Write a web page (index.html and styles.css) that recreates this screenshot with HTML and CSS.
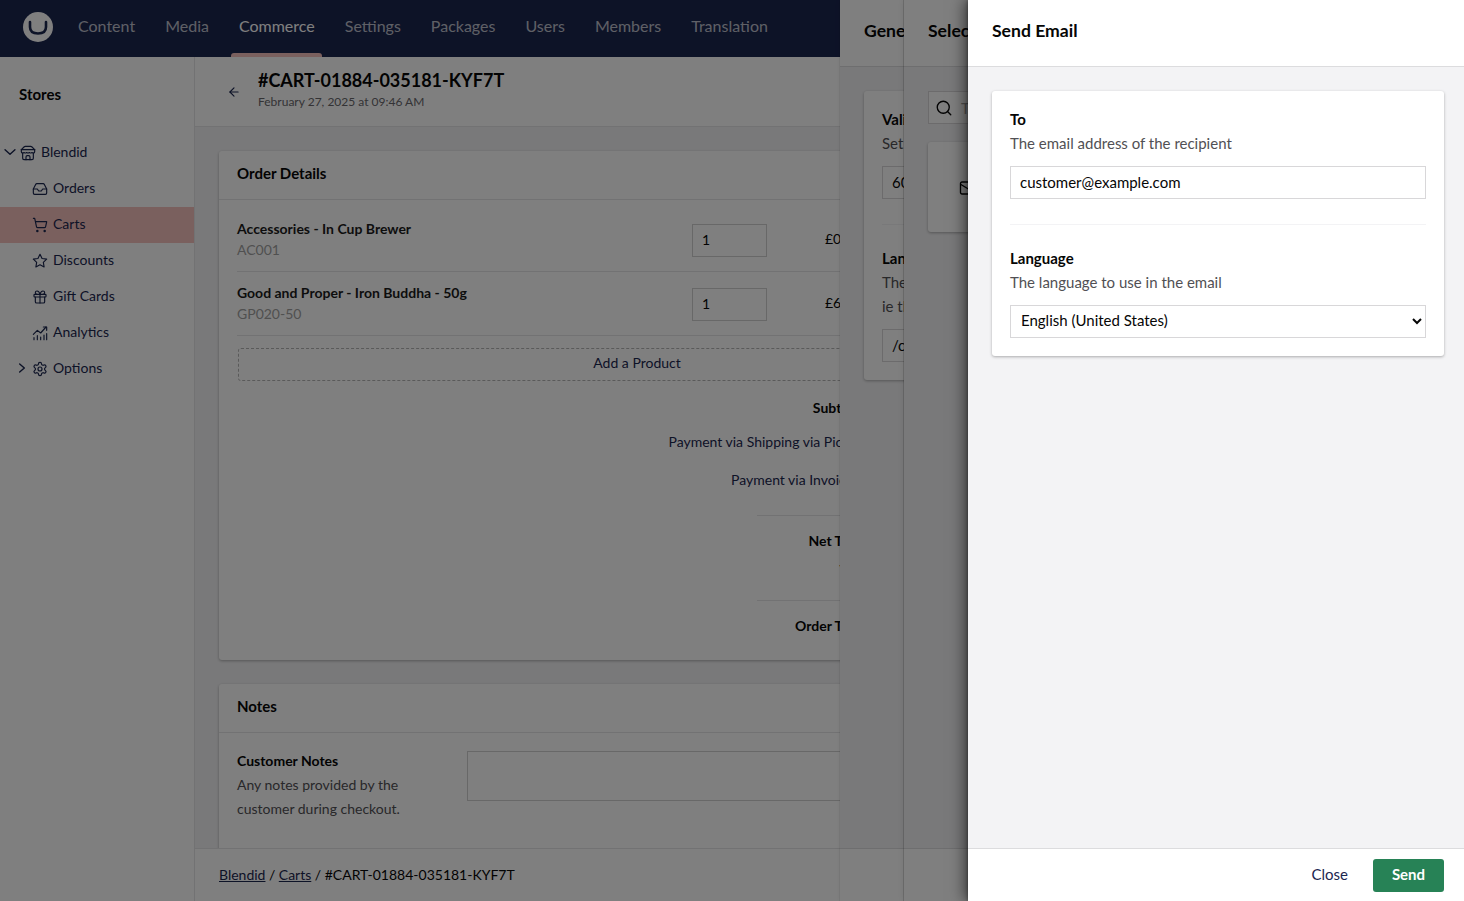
FILE: index.html
```html
<!DOCTYPE html>
<html lang="en">
<head>
<meta charset="utf-8">
<title>Send Email</title>
<link rel="stylesheet" href="styles.css">
</head>
<body>
<svg class="sprite" aria-hidden="true">
  <defs>
    <symbol id="i-down" viewBox="0 0 24 24"><path d="m3.500 8 8.500 8 8.500-8"/></symbol>
    <symbol id="i-right" viewBox="0 0 24 24"><path d="m8 5 8 7-8 7"/></symbol>
    <symbol id="i-store" viewBox="0 0 24 24"><path d="m2 7 4.41-4.41A2 2 0 0 1 7.83 2h8.34a2 2 0 0 1 1.42.59L22 7"/><path d="M4 12v8a2 2 0 0 0 2 2h12a2 2 0 0 0 2-2v-8"/><path d="M15 22v-4a2 2 0 0 0-2-2h-2a2 2 0 0 0-2 2v4"/><path d="M2 7h20"/><path d="M22 7v3a2 2 0 0 1-2 2 2.7 2.7 0 0 1-1.59-.63.7.7 0 0 0-.82 0A2.7 2.7 0 0 1 16 12a2.7 2.7 0 0 1-1.59-.63.7.7 0 0 0-.82 0A2.7 2.7 0 0 1 12 12a2.7 2.7 0 0 1-1.59-.63.7.7 0 0 0-.82 0A2.7 2.7 0 0 1 8 12a2.7 2.7 0 0 1-1.59-.63.7.7 0 0 0-.82 0A2.7 2.7 0 0 1 4 12a2 2 0 0 1-2-2V7"/></symbol>
    <symbol id="i-inbox" viewBox="0 0 24 24"><polyline points="22 12 16 12 14 15 10 15 8 12 2 12"/><path d="M5.45 5.11 2 12v6a2 2 0 0 0 2 2h16a2 2 0 0 0 2-2v-6l-3.45-6.89A2 2 0 0 0 16.76 4H7.24a2 2 0 0 0-1.79 1.11z"/></symbol>
    <symbol id="i-cart" viewBox="0 0 24 24"><circle cx="8" cy="21" r="1"/><circle cx="19" cy="21" r="1"/><path d="M2.05 2.05h2l2.66 12.42a2 2 0 0 0 2 1.58h9.78a2 2 0 0 0 1.95-1.57l1.65-7.43H5.12"/></symbol>
    <symbol id="i-star" viewBox="0 0 24 24"><polygon points="12 2 15.09 8.26 22 9.27 17 14.14 18.18 21.02 12 17.77 5.82 21.02 7 14.14 2 9.27 8.91 8.26 12 2"/></symbol>
    <symbol id="i-gift" viewBox="0 0 24 24"><rect x="3" y="8" width="18" height="4" rx="1"/><path d="M12 8v13"/><path d="M19 12v7a2 2 0 0 1-2 2H7a2 2 0 0 1-2-2v-7"/><path d="M7.5 8a2.5 2.500 0 0 1 0-5A4.800 8 0 0 1 12 8a4.800 8 0 0 1 4.500-5 2.500 2.500 0 0 1 0 5"/></symbol>
    <symbol id="i-chart" viewBox="0 0 24 24"><path d="M3 22v-3M8 22v-6M13 22v-4M18 22v-7M22 22v-9"/><path d="m2 14 6-6 5 4 8-9"/><path d="M17 3h5v5"/></symbol>
    <symbol id="i-gear" viewBox="0 0 24 24"><path d="M12.22 2h-.44a2 2 0 0 0-2 2v.18a2 2 0 0 1-1 1.73l-.43.25a2 2 0 0 1-2 0l-.15-.08a2 2 0 0 0-2.73.73l-.22.38a2 2 0 0 0 .73 2.73l.15.1a2 2 0 0 1 1 1.72v.51a2 2 0 0 1-1 1.74l-.15.09a2 2 0 0 0-.73 2.73l.22.38a2 2 0 0 0 2.73.73l.15-.08a2 2 0 0 1 2 0l.43.25a2 2 0 0 1 1 1.73V20a2 2 0 0 0 2 2h.44a2 2 0 0 0 2-2v-.18a2 2 0 0 1 1-1.73l.43-.25a2 2 0 0 1 2 0l.15.08a2 2 0 0 0 2.73-.73l.22-.39a2 2 0 0 0-.73-2.73l-.15-.08a2 2 0 0 1-1-1.74v-.5a2 2 0 0 1 1-1.74l.15-.09a2 2 0 0 0 .73-2.73l-.22-.38a2 2 0 0 0-2.73-.73l-.15.08a2 2 0 0 1-2 0l-.43-.25a2 2 0 0 1-1-1.73V4a2 2 0 0 0-2-2z"/><circle cx="12" cy="12" r="3"/></symbol>
  </defs>
</svg>

<div class="app">
  <header class="topbar">
    <svg class="logo" viewBox="0 0 30 30" aria-hidden="true"><circle cx="15" cy="15" r="15" fill="#fff"/><path class="logo-u" d="M7 10v5c0 4.500 2.500 6.500 8 6.500s8-2 8-6.500v-5"/></svg>
    <nav class="tabs">
      <a class="tab">Content</a>
      <a class="tab">Media</a>
      <a class="tab tab-active">Commerce</a>
      <a class="tab">Settings</a>
      <a class="tab">Packages</a>
      <a class="tab">Users</a>
      <a class="tab">Members</a>
      <a class="tab">Translation</a>
    </nav>
  </header>

  <div class="workspace">
    <aside class="sidebar">
      <h2 class="sidebar-title">Stores</h2>
      <ul class="tree">
        <li class="tree-row tree-root"><svg class="chev"><use href="#i-down"/></svg><svg class="ico"><use href="#i-store"/></svg>Blendid</li>
        <li class="tree-row"><span class="chev"></span><svg class="ico"><use href="#i-inbox"/></svg>Orders</li>
        <li class="tree-row tree-current"><span class="chev"></span><svg class="ico"><use href="#i-cart"/></svg>Carts</li>
        <li class="tree-row"><span class="chev"></span><svg class="ico"><use href="#i-star"/></svg>Discounts</li>
        <li class="tree-row"><span class="chev"></span><svg class="ico"><use href="#i-gift"/></svg>Gift Cards</li>
        <li class="tree-row"><span class="chev"></span><svg class="ico"><use href="#i-chart"/></svg>Analytics</li>
        <li class="tree-row"><svg class="chev"><use href="#i-right"/></svg><svg class="ico"><use href="#i-gear"/></svg>Options</li>
      </ul>
    </aside>

    <main class="main">
      <div class="main-head">
        <svg class="back" viewBox="0 0 24 24" aria-hidden="true"><path d="m12 19-7-7 7-7"/><path d="M19 12H5"/></svg>
        <div>
          <h1 class="order-id">#CART-01884-035181-KYF7T</h1>
          <p class="order-date">February 27, 2025 at 09:46 AM</p>
        </div>
      </div>

      <div class="main-scroll">
        <section class="card">
          <h3 class="card-head">Order Details</h3>
          <div class="card-body">
            <div class="line-item">
              <div class="line-info">
                <strong class="line-name">Accessories - In Cup Brewer</strong>
                <span class="line-sku">AC001</span>
              </div>
              <input class="qty" value="1">
              <span class="price">£0.00</span>
            </div>
            <div class="line-item">
              <div class="line-info">
                <strong class="line-name">Good and Proper - Iron Buddha - 50g</strong>
                <span class="line-sku">GP020-50</span>
              </div>
              <input class="qty" value="1">
              <span class="price">£6.50</span>
            </div>
            <button class="add-product">Add a Product</button>
            <div class="summary">
              <div class="sum-row sum-strong">Subtotal</div>
              <div class="sum-row sum-ship">Payment via Shipping via Pickup</div>
              <div class="sum-row sum-pay">Payment via Invoice</div>
              <hr class="sum-rule sum-rule-a">
              <div class="sum-row sum-strong sum-total">Net Total</div>
              <div class="sum-row sum-vat">VAT</div>
              <hr class="sum-rule sum-rule-b">
              <div class="sum-row sum-strong sum-total">Order Total</div>
            </div>
          </div>
        </section>

        <section class="card card-notes">
          <h3 class="card-head">Notes</h3>
          <div class="notes-body">
            <div class="notes-label">
              <strong class="notes-title">Customer Notes</strong>
              <p class="notes-desc">Any notes provided by the customer during checkout.</p>
            </div>
            <div class="notes-area"></div>
          </div>
        </section>
      </div>

      <footer class="crumbs"><a class="crumb-link">Blendid</a> / <a class="crumb-link">Carts</a> / #CART-01884-035181-KYF7T</footer>
    </main>
  </div>

  <section class="drawer drawer-one">
    <h2 class="drawer-head">Generate Link</h2>
    <div class="drawer-body">
      <div class="card form-card">
        <div class="field">
          <strong class="field-label">Validity</strong>
          <p class="field-desc">Set the period the link is valid for</p>
          <input class="text-input" value="60">
        </div>
        <hr class="field-rule">
        <div class="field field-next">
          <strong class="field-label">Landing Page</strong>
          <p class="field-desc">The path to redirect the customer to,<br>ie the checkout page</p>
          <input class="text-input" value="/checkout">
        </div>
      </div>
    </div>
    <div class="drawer-foot"></div>
  </section>

  <section class="drawer drawer-two">
    <h2 class="drawer-head">Select Template</h2>
    <div class="drawer-body">
      <div class="search">
        <svg class="search-ico" viewBox="0 0 24 24" aria-hidden="true"><circle cx="11" cy="11" r="8"/><path d="m21 21-4.300-4.300"/></svg>
        <span class="search-text">Type to search</span>
      </div>
      <div class="card template-card">
        <svg class="mail-ico" viewBox="0 0 24 24" aria-hidden="true"><rect x="2" y="4" width="20" height="16" rx="2"/><path d="m22 7-10 6L2 7"/></svg>
      </div>
    </div>
    <div class="drawer-foot"></div>
  </section>

  <div class="scrim"></div>

  <section class="drawer drawer-top">
    <h2 class="drawer-head">Send Email</h2>
    <div class="drawer-body">
      <div class="card form-card">
        <div class="field">
          <strong class="field-label">To</strong>
          <p class="field-desc">The email address of the recipient</p>
          <input class="text-input" value="customer@example.com">
        </div>
        <hr class="field-rule">
        <div class="field field-next">
          <strong class="field-label">Language</strong>
          <p class="field-desc">The language to use in the email</p>
          <select class="select-input"><option>English (United States)</option></select>
        </div>
      </div>
    </div>
    <div class="drawer-foot">
      <button class="btn-close">Close</button>
      <button class="btn-send">Send</button>
    </div>
  </section>
</div>
</body>
</html>
```

FILE: styles.css
```css
* { box-sizing: border-box; }
html, body { margin: 0; height: 100%; }
body {
  font-family: Lato, "Liberation Sans", sans-serif;
  font-size: 15px;
  line-height: 24px;
  color: #060606;
  background: #fff;
  overflow: hidden;
}
h1, h2, h3, p, ul { margin: 0; padding: 0; }
.sprite { display: none; }

.app { position: relative; width: 100%; height: 100vh; display: flex; flex-direction: column; overflow: hidden; }

/* top bar */
.topbar { flex: 0 0 57px; display: flex; align-items: center; background: #1b264f; padding-left: 23px; }
.logo { width: 30px; height: 30px; margin-top: -3px; }
.logo-u { fill: none; stroke: #1b264f; stroke-width: 2.600; stroke-linecap: round; }
.tabs { display: flex; height: 100%; margin-left: 10px; }
.tab { position: relative; display: flex; align-items: center; padding: 0 15px 5px; font-size: 16px; color: rgba(255,255,255,.72); }
.tab-active { color: #fff; }
.tab-active::after { content: ""; position: absolute; left: 7px; right: 8px; bottom: 0; height: 4px; background: #f5c1bc; border-radius: 3px 3px 0 0; }

/* layout */
.workspace { flex: 1; min-height: 0; display: flex; }
.sidebar { flex: 0 0 195px; background: #fff; border-right: 1px solid #e4e4e6; }
.sidebar-title { height: 78px; padding: 25px 19px 0; font-size: 15px; font-weight: 700; line-height: 24px; }
.tree { list-style: none; }
.tree-row { height: 36px; display: flex; align-items: center; padding: 0 0 2px 15px; font-size: 14px; color: #1b264f; }
.tree-root { padding-left: 3px; }
.tree-current { background: #f5c1bc; }
.chev { flex: 0 0 14px; width: 14px; height: 14px; margin-right: 3px; fill: none; stroke: #1b264f; stroke-width: 2.400; stroke-linecap: round; stroke-linejoin: round; }
.ico { flex: 0 0 16px; width: 16px; height: 16px; margin-right: 5px; margin-top: 2px; fill: none; stroke: #1b264f; stroke-width: 1.75; stroke-linecap: round; stroke-linejoin: round; }

.main { flex: 1; min-width: 0; display: flex; flex-direction: column; background: #f3f3f5; }
.main-head { flex: 0 0 70px; display: flex; align-items: center; padding: 0 0 2px 32px; background: #fff; border-bottom: 1px solid #e4e4e6; }
.back { width: 14px; height: 14px; margin-right: 17px; margin-top: 3px; fill: none; stroke: #1b264f; stroke-width: 2; stroke-linecap: round; stroke-linejoin: round; }
.order-id { font-size: 18px; font-weight: 700; line-height: 24px; margin-top: -3px; }
.order-date { font-size: 12px; line-height: 18px; color: #68676b; margin-top: 1px; }

.main-scroll { flex: 1; min-height: 0; overflow: hidden; padding: 24px; }
.card { background: #fff; border-radius: 3px; box-shadow: 0 1px 3px rgba(0,0,0,.3); }
.card-head { height: 49px; padding: 0 18px 4px; display: flex; align-items: center; font-size: 15px; font-weight: 700; border-bottom: 1px solid #e4e4e6; }
.card-body { padding: 8px 18px 22px; }
.line-item { height: 64px; display: flex; border-bottom: 1px solid #e4e4e6; padding-top: 9px; }
.line-info { width: 455px; display: flex; flex-direction: column; }
.line-name { font-size: 14px; font-weight: 700; line-height: 26px; margin-top: -1px; color: #1b1b1b; }
.line-sku { font-size: 14px; line-height: 18px; margin-top: -1px; color: #a1a1a1; }
.qty { width: 75px; height: 33px; margin-top: 7px; padding: 0 9px 2px; border: 1px solid #d0d0d0; font: 14px Lato, sans-serif; color: #060606; background: #fff; }
.price { margin: 10px 0 0 58px; font-size: 14px; }
.add-product { display: block; width: 100%; max-width: 798px; height: 33px; margin: 12px 0 0 1px; padding: 0 0 4px; border: 1px dashed #b4b4b4; border-radius: 3px; background: transparent; font: 14px Lato, sans-serif; color: #1b264f; }
.summary { margin-top: 15px; }
.sum-row { height: 24px; text-align: right; padding-right: 557px; font-size: 14px; color: #1b264f; white-space: nowrap; }
.sum-strong { font-weight: 700; color: #060606; }
.sum-ship { margin-top: 10px; }
.sum-pay { margin-top: 14px; padding-right: 569px; }
.sum-vat { margin-top: 5px; color: #060606; }
.sum-total { margin-top: 13px; }
.sum-rule { height: 1px; margin: 0 0 0 520px; border: 0; background: #e4e4e6; }
.sum-rule-a { margin-top: 23px; }
.sum-rule-b { margin-top: 18px; }

.card-notes { margin-top: 24px; }
.notes-body { display: flex; align-items: flex-start; min-height: 220px; padding: 18px; }
.notes-label { width: 230px; }
.notes-title { display: block; font-size: 14px; font-weight: 700; line-height: 20px; margin-bottom: 2px; }
.notes-desc { font-size: 14px; color: #515054; width: 180px; line-height: 24px; }
.notes-area { flex: 1; height: 50px; border: 1px solid #d0d0d0; background: #fff; }

.crumbs { flex: 0 0 53px; display: flex; align-items: center; gap: 3.500px; padding: 0 0 1px 24px; background: #fff; border-top: 1px solid #e4e4e6; font-size: 14px; color: #060606; }
.crumb-link { color: #1b264f; text-decoration: underline; }

/* drawers */
.scrim { position: absolute; inset: 0; background: rgba(0,0,0,.5); }
.drawer { position: absolute; top: 0; right: 0; bottom: 0; display: flex; flex-direction: column; background: #f3f3f5; }
.drawer-one { left: 840px; box-shadow: -1px 0 0 rgba(0,0,0,.05), 0 0 6px rgba(0,0,0,.06); }
.drawer-two { left: 904px; box-shadow: -1px 0 0 rgba(0,0,0,.14), 0 0 8px rgba(0,0,0,.1); }
.drawer-top { left: 968px; box-shadow: -4px 0 14px rgba(0,0,0,.5), 0 0 4px rgba(0,0,0,.45); }
.drawer-head { flex: 0 0 67px; display: flex; align-items: center; padding: 0 24px 5px; background: #fff; border-bottom: 1px solid #dcdcde; font-size: 17.600px; font-weight: 700; line-height: 24px; white-space: nowrap; }
.drawer-body { flex: 1; min-height: 0; padding: 24px; }
.drawer-top .drawer-body { padding-right: 20px; }
.drawer-foot { flex: 0 0 53px; display: flex; align-items: center; justify-content: flex-end; gap: 7px; padding: 0 20px; background: #fff; border-top: 1px solid #dcdcde; }

.form-card { padding: 18px; }
.field-label { display: block; font-size: 15px; font-weight: 700; line-height: 20px; }
.field-desc { margin-top: 2px; margin-bottom: 11px; font-size: 15px; line-height: 24px; color: #515054; white-space: nowrap; }
.field-next { margin-top: 23px; }
.field-rule { height: 1px; margin: 25px 0 0; border: 0; background: #f3f3f5; }
.text-input { display: block; width: 100%; height: 33px; padding: 0 9px 2px; border: 1px solid #d8d7d9; background: #fff; font: 15px Lato, sans-serif; color: #060606; }
.select-input { display: block; width: 100%; height: 33px; padding: 0 6px 3px; border: 1px solid #d8d7d9; background: #fff; font: 15px Lato, sans-serif; color: #060606; border-radius: 0; }

.search { display: flex; align-items: center; height: 33px; padding-left: 6px; border: 1px solid #d8d7d9; background: #fff; color: #a1a1a1; }
.search-ico { width: 18px; height: 18px; margin-right: 8px; fill: none; stroke: #060606; stroke-width: 1.800; stroke-linecap: round; }
.search-text { font-size: 15px; white-space: nowrap; }
.template-card { height: 90px; margin-top: 18px; padding: 37px 0 0 31px; }
.mail-ico { display: block; width: 18px; height: 18px; fill: none; stroke: #060606; stroke-width: 1.800; }

.btn-close { height: 33px; padding: 0 18px 2px; border: 0; background: none; font: 15px Lato, sans-serif; color: #1b264f; }
.btn-send { width: 71px; height: 33px; padding: 0 0 2px; border: 0; border-radius: 3px; background: #278256; color: #fff; font: 700 15px Lato, sans-serif; }
```
